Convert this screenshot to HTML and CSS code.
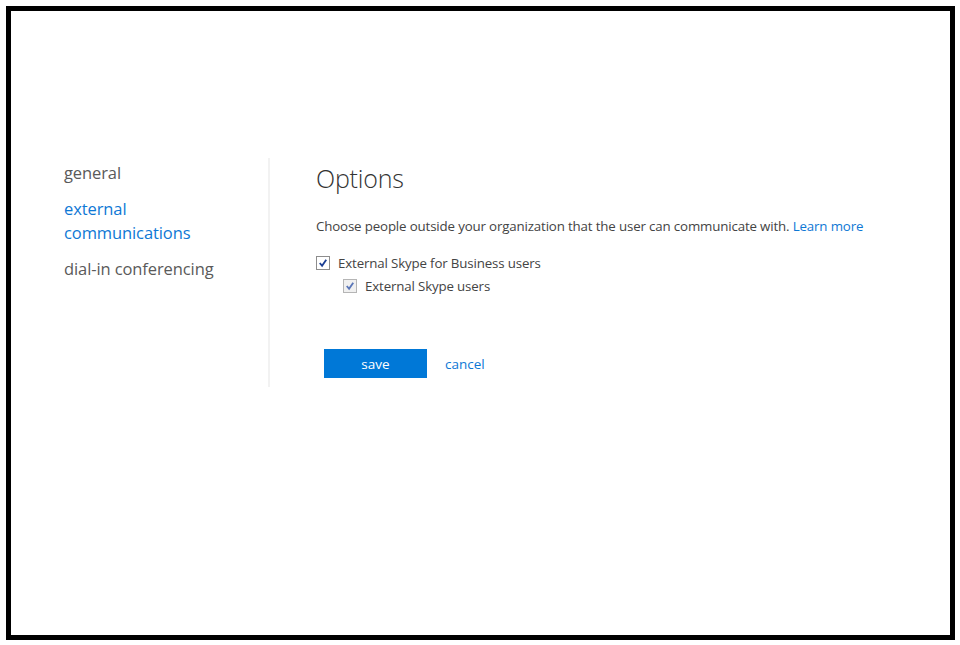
FILE: index.html
```html
<!DOCTYPE html>
<html lang="en">
<head>
<meta charset="utf-8">
<title>Options</title>
<link rel="stylesheet" href="styles.css">
</head>
<body>
<div class="frame">
  <div class="main">
    <nav class="nav">
      <a class="nav-item">general</a>
      <a class="nav-item active">external<br>communications</a>
      <a class="nav-item">dial-in conferencing</a>
    </nav>
    <section class="content">
      <h1 class="title">Options</h1>
      <p class="desc">Choose people outside your organization that the user can communicate with. <a class="link">Learn more</a></p>
      <div class="check-row">
        <span class="box"><svg viewBox="0 0 13 13" width="13" height="13"><path d="M3 6.5 L5.5 9.5 L10 3" fill="none" stroke="#1c3f94" stroke-width="2"/></svg></span>
        <span class="label">External Skype for Business users</span>
      </div>
      <div class="check-row sub">
        <span class="box dim"><svg viewBox="0 0 13 13" width="13" height="13"><path d="M3 6.5 L5.5 9.5 L10 3" fill="none" stroke="#5a76b8" stroke-width="2"/></svg></span>
        <span class="label">External Skype users</span>
      </div>
      <div class="actions">
        <button class="btn-save">save</button>
        <a class="link cancel">cancel</a>
      </div>
    </section>
  </div>
</div>
</body>
</html>
```

FILE: styles.css
```css
html, body {
  margin: 0;
  padding: 0;
  background: #fff;
}
body {
  font-family: "Open Sans", "Noto Sans", sans-serif;
  color: #444;
}
.frame {
  box-sizing: border-box;
  margin: 6px 0 0 6px;
  width: 949px;
  height: 634px;
  border: 5px solid #000;
  background: #fff;
}
.main {
  display: flex;
  padding: 147px 0 0 53px;
}
.nav {
  width: 204px;
  display: flex;
  flex-direction: column;
  gap: 12px;
  padding-top: 3px;
}
.nav-item {
  font-size: 16.5px;
  line-height: 24px;
  color: #5a5a5a;
  letter-spacing: -0.1px;
}
.nav-item.active {
  color: #0e78d5;
}
.content {
  border-left: 2px solid #f2f2f2;
  padding: 5px 0 9px 46px;
  height: 215px;
}
.title {
  margin: 0;
  font-size: 25px;
  font-weight: 300;
  line-height: 30px;
  color: #333;
  letter-spacing: -0.2px;
}
.desc {
  margin: 23px 0 0 0;
  font-size: 13.3px;
  line-height: 20px;
  color: #444;
  letter-spacing: -0.15px;
}
.link {
  color: #0e78d5;
}
.check-row {
  display: flex;
  align-items: center;
  gap: 8px;
  margin-top: 17px;
  height: 20px;
}
.check-row.sub {
  margin-top: 3px;
  padding-left: 27px;
}
.box {
  box-sizing: border-box;
  width: 14px;
  height: 14px;
  border: 1px solid #8d8d8d;
  background: #fff;
  display: flex;
  align-items: center;
  justify-content: center;
}
.box svg {
  width: 12px;
  height: 12px;
}
.box.dim {
  border-color: #b5b5b5;
  background: #f0f0f0;
}
.label {
  font-size: 13.3px;
  color: #444;
  letter-spacing: -0.15px;
}
.actions {
  display: flex;
  align-items: center;
  gap: 18px;
  margin: 53px 0 0 8px;
}
.btn-save {
  width: 103px;
  height: 29px;
  border: none;
  background: #0078d7;
  color: #fff;
  font-family: "Open Sans", "Noto Sans", sans-serif;
  font-size: 13.5px;
  padding: 0;
}
.cancel {
  font-size: 13.5px;
}
```
